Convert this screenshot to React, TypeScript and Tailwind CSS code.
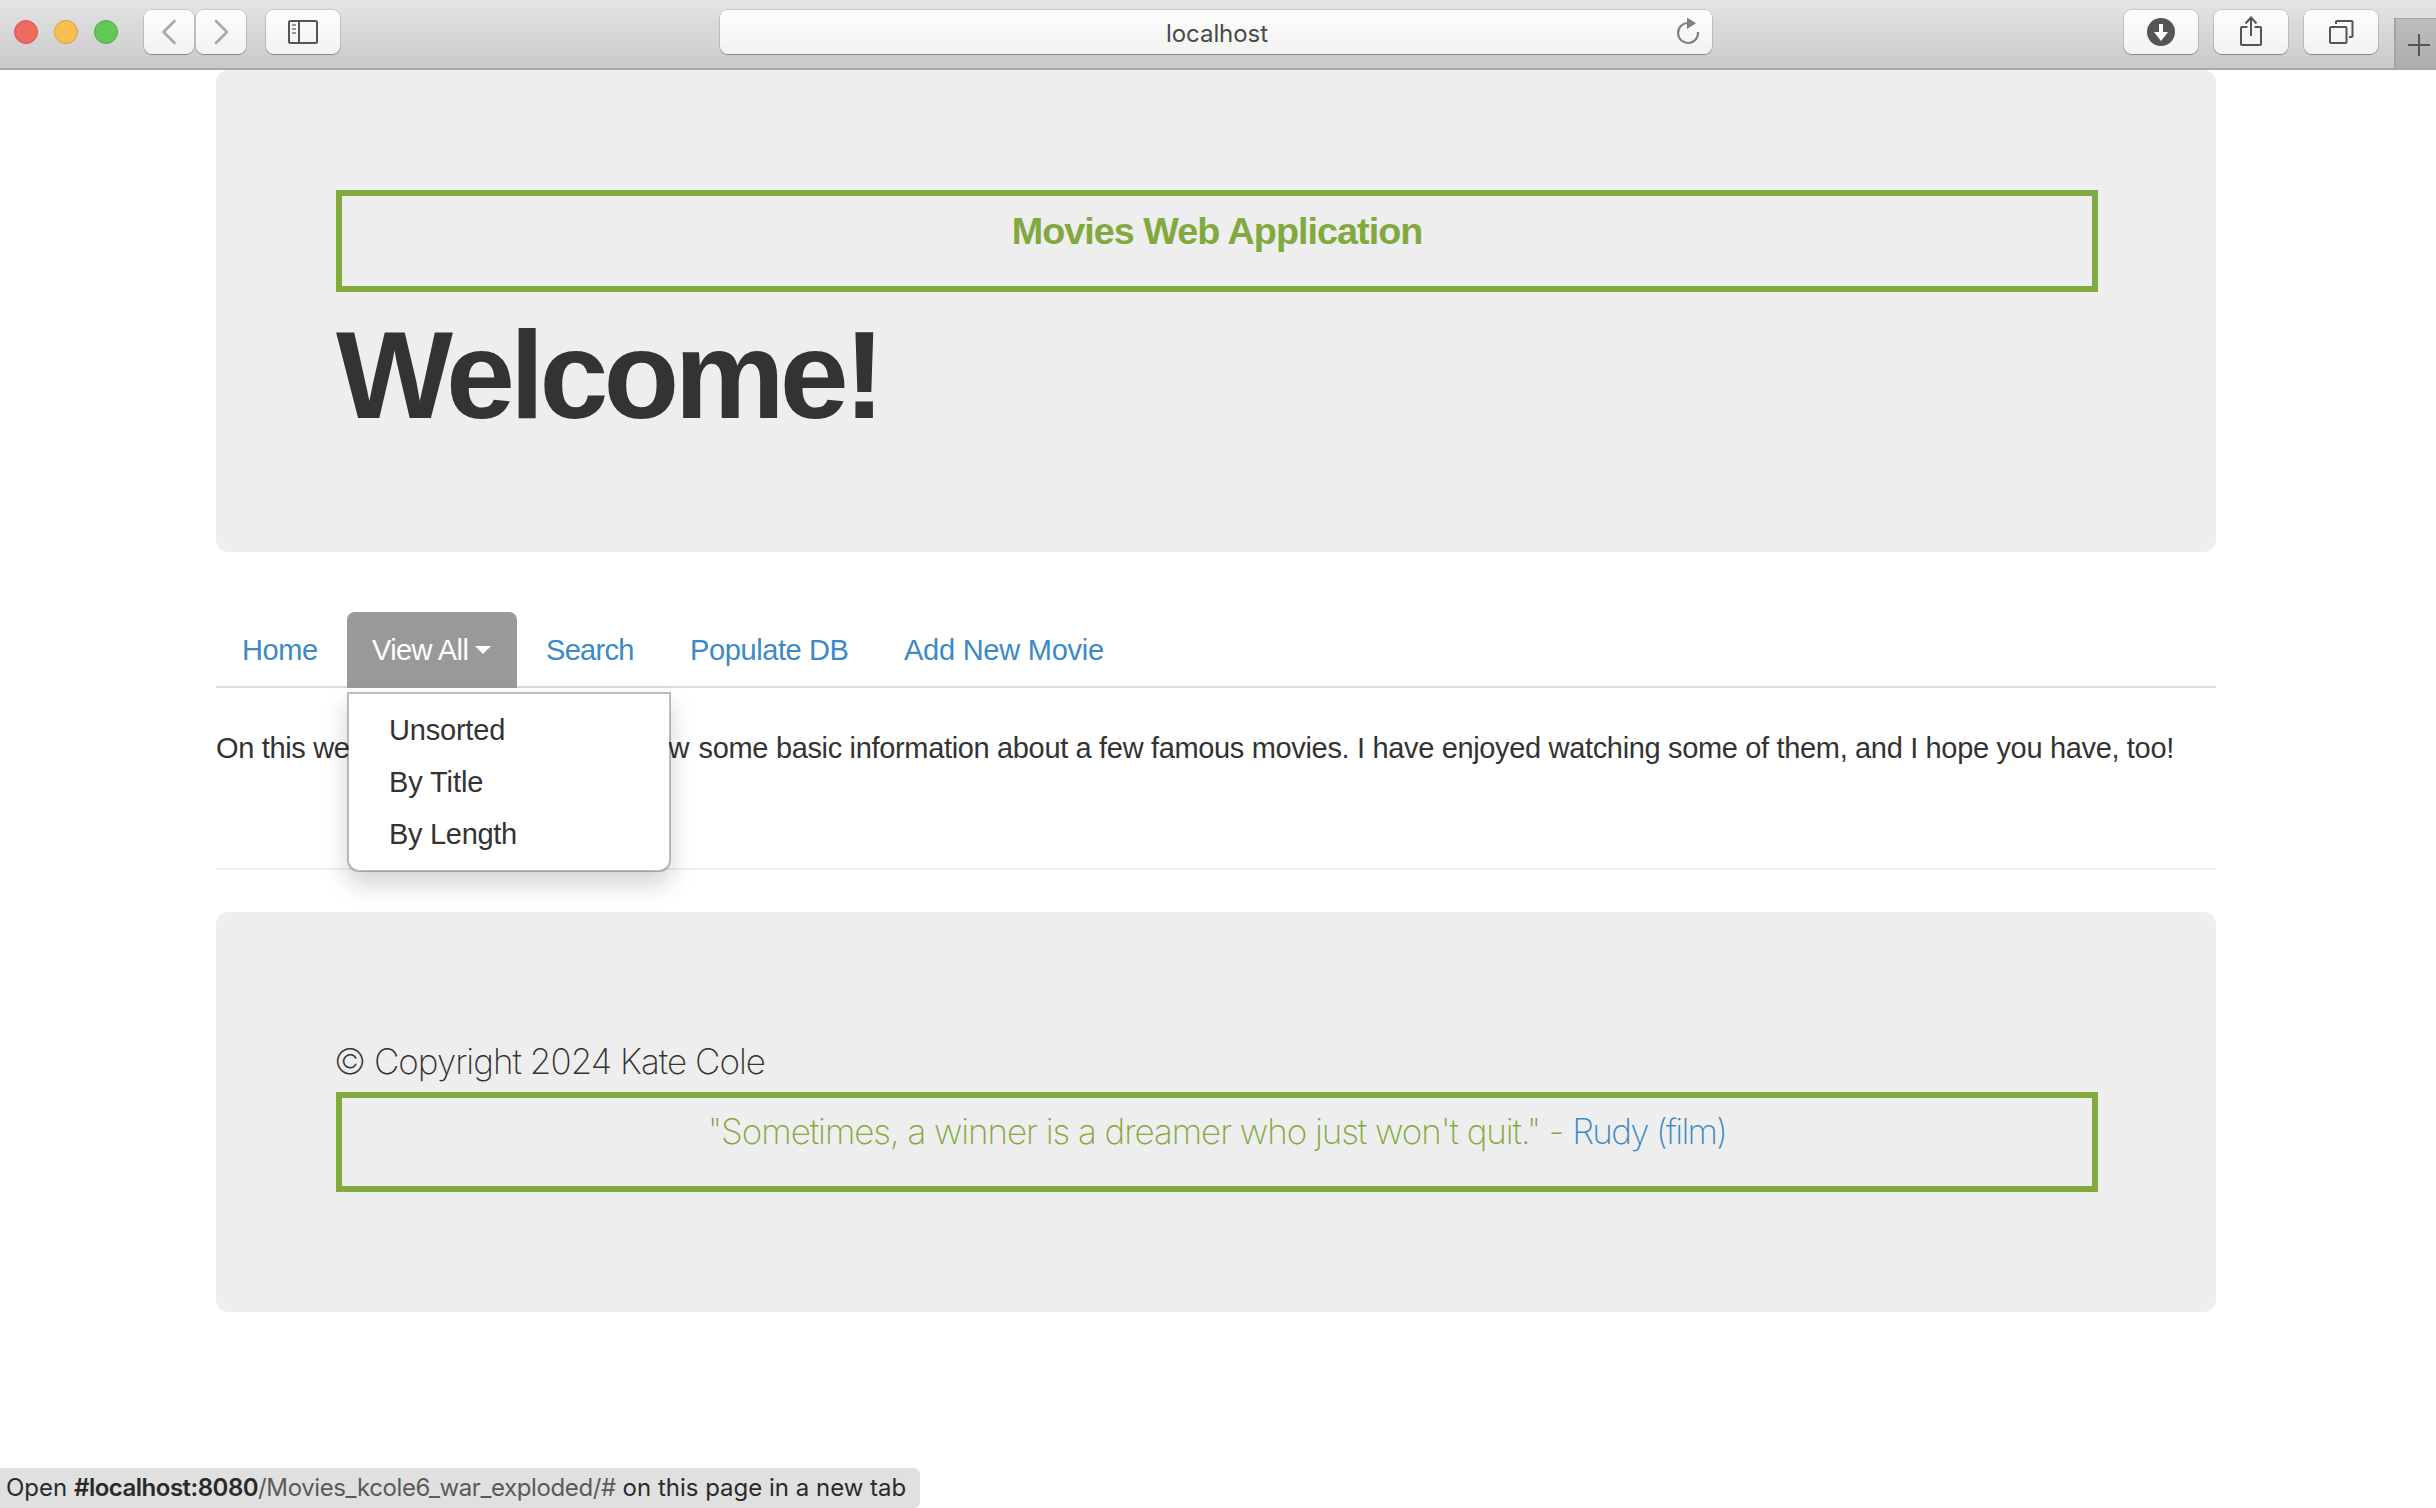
import type { ReactNode } from "react";

const toolButton =
  "flex h-[44px] shrink-0 items-center justify-center rounded-[8px] bg-linear-to-b from-[#fdfdfd] to-[#f2f2f2] shadow-[0_0_0_1px_rgba(0,0,0,0.1),0_1px_1px_rgba(0,0,0,0.3)]";

function Toolbar() {
  return (
    <header className="relative flex h-[70px] items-start border-b-2 border-[#a8a8a8] bg-linear-to-b from-[#e4e4e4] to-[#cacaca] pt-[10px] pl-[14px] font-[Inter,sans-serif]">
      <div className="mt-[10px] flex gap-4">
        <span className="size-6 rounded-full border border-[#d9564c] bg-[#ed6b5f]" />
        <span className="size-6 rounded-full border border-[#dca13c] bg-[#f6be50]" />
        <span className="size-6 rounded-full border border-[#4eab42] bg-[#62c756]" />
      </div>
      <div className="ml-[26px] flex gap-[2px]">
        <button className={`${toolButton} w-[50px]`}>
          <svg width="50" height="44" fill="none" stroke="#a8a8a8" strokeWidth="2.6" strokeLinecap="round" strokeLinejoin="round">
            <path d="M30.5 11 19.5 22 30.5 33" />
          </svg>
        </button>
        <button className={`${toolButton} w-[50px]`}>
          <svg width="50" height="44" fill="none" stroke="#a8a8a8" strokeWidth="2.6" strokeLinecap="round" strokeLinejoin="round">
            <path d="M20 11 31 22 20 33" />
          </svg>
        </button>
      </div>
      <button className={`${toolButton} ml-[20px] w-[74px]`}>
        <svg width="74" height="44" fill="none" stroke="#555" strokeWidth="2">
          <rect x="23" y="11" width="28" height="22" rx="1.5" />
          <path d="M33 11v22" />
          <path d="M26 15h4M26 19h4M26 23h4" stroke="#999" />
        </svg>
      </button>
      <div className={`${toolButton} relative ml-[380px] w-[992px] pt-[3px] pl-[2px]`}>
        <span className="text-[24px] leading-[30px] tracking-[-0.08px] text-[#4a4a4a]">localhost</span>
        <svg className="absolute top-0 right-0" width="50" height="44" fill="none">
          <path d="M26.5 13a10 10 0 1 0 9.5 9" stroke="#808080" strokeWidth="2.2" />
          <path d="M25 7.5 34 13.2 25 19Z" fill="#808080" />
        </svg>
      </div>
      <div className="ml-[412px] flex gap-4">
        <button className={`${toolButton} w-[74px]`}>
          <svg width="74" height="44">
            <circle cx="37" cy="22" r="14" fill="#555" />
            <path d="M35 14h4v8h5L37 31l-7-9h5Z" fill="#fff" />
          </svg>
        </button>
        <button className={`${toolButton} w-[74px]`}>
          <svg width="74" height="44" fill="none" stroke="#555" strokeWidth="2">
            <path d="M33.5 17H28a1 1 0 0 0-1 1v16a1 1 0 0 0 1 1h18a1 1 0 0 0 1-1V18a1 1 0 0 0-1-1h-5.500" />
            <path d="M37 26V8M31.500 13.500 37 7.500 42.500 13.500" />
          </svg>
        </button>
        <button className={`${toolButton} w-[74px]`}>
          <svg width="74" height="44" fill="none" stroke="#555" strokeWidth="2">
            <rect x="26" y="17" width="16.500" height="16" rx="1" />
            <path d="M32 14v-2a1 1 0 0 1 1-1h14.500a1 1 0 0 1 1 1v14a1 1 0 0 1-1 1H45" />
          </svg>
        </button>
      </div>
      <button className="mt-[8px] ml-auto h-[50px] w-[42px] shrink-0 border-t border-l-2 border-[#a3a3a3] bg-linear-to-b from-[#bdbdbd] to-[#adadad]">
        <svg width="40" height="49" fill="none" stroke="#555" strokeWidth="2">
          <path d="M12 26h22M23 15v22" />
        </svg>
      </button>
    </header>
  );
}

function GreenBox({ className, children }: { className: string; children: ReactNode }) {
  return <div className={`w-[1762px] border-[6px] border-[#82a93e] text-center text-[#82a93e] ${className}`}>{children}</div>;
}

function NavTabs() {
  return (
    <nav className="mt-[60px] flex h-[76px] gap-1 bg-[linear-gradient(#ddd,#ddd)] bg-[length:100%_2px] bg-bottom bg-no-repeat text-[29px] leading-[40px] text-[#3b89c7]">
      <a className="w-[127px] pt-[18px] pl-[26px] tracking-[-0.4px]">Home</a>
      <div className="relative w-[170px] rounded-t-[8px] bg-[#999]">
        <a className="flex items-center pt-[18px] pl-[25px] tracking-[-0.6px] text-white">
          View All
          <svg className="mt-[-1px] ml-[7px]" width="16" height="8" fill="#fff">
            <path d="M0 0h16L8 8Z" />
          </svg>
        </a>
        <ul className="absolute top-[80px] left-0 z-10 h-[180px] w-[324px] rounded-b-[12px] border-2 border-black/25 bg-white bg-clip-padding py-[10px] text-[#333] shadow-[0_12px_24px_rgba(0,0,0,0.175)]">
          <li className="py-[6px] pl-[40px] tracking-[-0.2px]">Unsorted</li>
          <li className="py-[6px] pl-[40px] tracking-[-0.1px]">By Title</li>
          <li className="py-[6px] pl-[40px] tracking-[-0.3px]">By Length</li>
        </ul>
      </div>
      <a className="w-[140px] pt-[18px] pl-[25px] tracking-[-0.7px]">Search</a>
      <a className="w-[210px] pt-[18px] pl-[25px] tracking-[-0.4px]">Populate DB</a>
      <a className="pt-[18px] pl-[25px] tracking-[-0.25px]">Add New Movie</a>
    </nav>
  );
}

export default function App() {
  return (
    <div className="relative h-[1508px] w-[2436px] overflow-hidden bg-white font-['Liberation_Sans',Arial,sans-serif] text-[#333]">
      <Toolbar />
      <main className="ml-[216px] w-[2000px]">
        <section className="h-[482px] rounded-[12px] bg-[#eee] px-[120px] pt-[120px]">
          <GreenBox className="h-[102px] pt-[14px]">
            <h2 className="text-[37.8px] leading-[42px] font-bold tracking-[-1px]">Movies Web Application</h2>
          </GreenBox>
          <h1 className="mt-[20px] text-[124px] leading-[126px] font-bold tracking-[-4.9px]">Welcome!</h1>
        </section>
        <NavTabs />
        <p className="mt-[40px] text-[29px] leading-[40px] tracking-[-0.34px] whitespace-nowrap">
          On this we<span className="tracking-[-1.14px]">bsite, you will be able to vie</span>
          <span className="tracking-[1.5px]">w</span> some basic information about a few famous movies. I have enjoyed
          watching some of them, and I hope you have, too!
        </p>
        <hr className="mt-[100px] border-t-2 border-[#eee]" />
        <footer className="mt-[42px] h-[400px] rounded-[12px] bg-[#eee] px-[120px] pt-[128px] font-[Inter,sans-serif] text-[35px] leading-[42px] font-[250]">
          <p className="-ml-[2px] tracking-[-0.97px]">© Copyright 2024 Kate Cole</p>
          <GreenBox className="mt-[10px] h-[100px] pt-[12px] tracking-[-1.06px]">
            "Sometimes, a winner is a dreamer who just won't quit." -{" "}
            <a className="tracking-[-1.7px] text-[#3b89c7]">Rudy (film)</a>
          </GreenBox>
        </footer>
      </main>
      <div className="absolute bottom-0 left-0 h-[40px] w-[920px] rounded-tr-[6px] rounded-br-[6px] bg-[#e0e0e0] pl-[6px] font-[Inter,sans-serif] text-[24px] leading-[40px] whitespace-pre text-[#2a2a2a]">
        Open <b className="font-semibold tracking-[-0.5px]">#localhost:8080</b>
        <span className="tracking-[-0.39px] text-[#5a5a5a]">/Movies_kcole6_war_exploded/#</span> on this page in a new tab
      </div>
    </div>
  );
}
